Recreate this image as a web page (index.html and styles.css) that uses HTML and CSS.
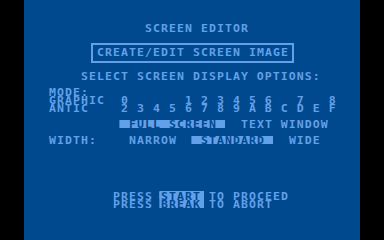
FILE: index.html
```html
<!DOCTYPE html>
<html>
<head>
<meta charset="utf-8">
<link rel="stylesheet" href="styles.css">
</head>
<body>
<div class="screen">
  <div class="row">              SCREEN EDITOR</div>
  <div class="box"><div class="row">CREATE/EDIT SCREEN IMAGE</div></div>
  <div class="row select">      SELECT SCREEN DISPLAY OPTIONS:</div>
  <div class="row gap">  MODE:</div>
  <div class="row">  GRAPHIC  0       1 2 3 4 5 6   7   8</div>
  <div class="row">  ANTIC    2 3 4 5 6 7 8 9 A B C D E F</div>
  <div class="row gap">           <span class="inv"> FULL SCREEN </span>  TEXT WINDOW</div>
  <div class="row gap">  WIDTH:    NARROW  <span class="inv"> STANDARD </span>  WIDE</div>
  <div class="row prompt">          PRESS <span class="key key-top">START</span> TO PROCEED</div>
  <div class="row">          PRESS <span class="key key-bottom">BREAK</span> TO ABORT</div>
</div>
</body>
</html>
```
FILE: styles.css
```css
html, body {
  margin: 0;
  padding: 0;
}
body {
  background: #000;
  width: 384px;
  height: 240px;
  overflow: hidden;
}
.screen {
  margin-left: 24px;
  width: 336px;
  height: 240px;
  box-sizing: border-box;
  padding: 24px 0 0 9px;
  background: #00498f;
  color: #62a0ea;
  font-family: "DejaVu Sans Mono", monospace;
  font-weight: bold;
  font-size: 9.6px;
  letter-spacing: 0.887px;
}
/* glyphs are widened 1.2x so each character cell is 8px wide, like the 8x8 character grid */
.row {
  width: 260px;
  height: 8px;
  line-height: 9.4px;
  white-space: pre;
  transform: scaleX(1.2);
  transform-origin: left top;
}
.box {
  width: 203px;
  box-sizing: border-box;
  margin: 11px 0 0 58px;
  border: 2px solid #62a0ea;
  padding: 3px 0 5px 4px;
}
.box .row {
  width: 162px;
}
.select {
  margin-top: 9px;
}
.gap {
  margin-top: 8px;
}
.inv {
  display: inline-block;
  vertical-align: top;
  height: 8px;
  margin-left: -0.833px;
  padding-left: 0.833px;
  background: #62a0ea;
  color: #00498f;
}
.prompt {
  margin-top: 48px;
}
.key {
  display: inline-block;
  vertical-align: top;
  height: 8px;
  background: #62a0ea;
  color: #00498f;
}
.key-top {
  box-shadow: -1.667px 0 0 #62a0ea, 2.5px 0 0 #62a0ea, -1.667px -1px 0 #62a0ea, 2.5px -1px 0 #62a0ea, 0 -1px 0 #62a0ea;
}
.key-bottom {
  box-shadow: -1.667px 0 0 #62a0ea, 2.5px 0 0 #62a0ea;
}
```
